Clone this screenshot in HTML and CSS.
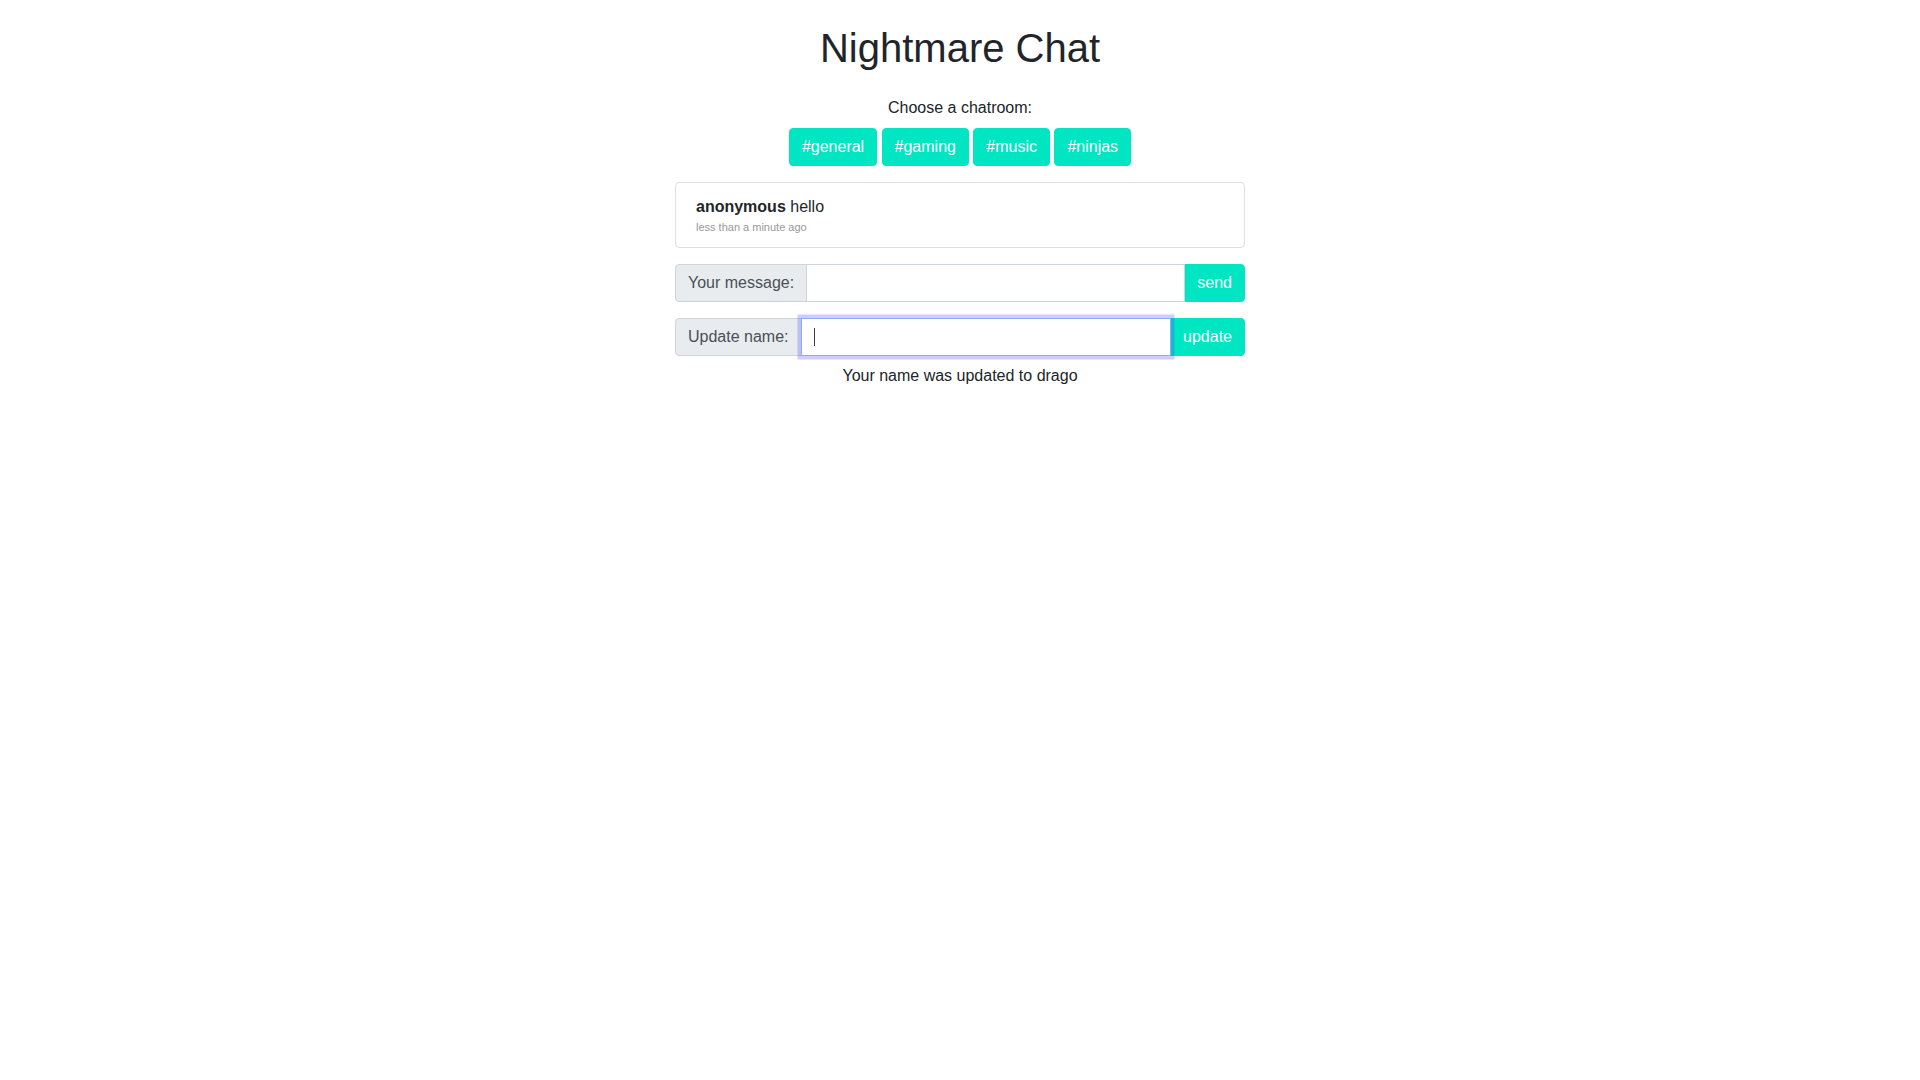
FILE: index.html
```html
<!DOCTYPE html>
<html lang="en">
<head>
<meta charset="utf-8">
<title>Nightmare Chat</title>
<link rel="stylesheet" href="styles.css">
</head>
<body>
<main class="app">
  <h1 class="title">Nightmare Chat</h1>
  <p class="choose">Choose a chatroom:</p>
  <div class="rooms">
    <button class="btn">#general</button>
    <button class="btn">#gaming</button>
    <button class="btn">#music</button>
    <button class="btn">#ninjas</button>
  </div>
  <ul class="messages">
    <li class="message">
      <div class="message-line"><strong class="author">anonymous</strong> hello</div>
      <div class="message-time">less than a minute ago</div>
    </li>
  </ul>
  <form class="input-group">
    <span class="input-label">Your message:</span>
    <div class="field-wrap">
      <input class="field" type="text">
    </div>
    <button type="button" class="btn btn-append">send</button>
  </form>
  <form class="input-group input-group-last">
    <span class="input-label">Update name:</span>
    <div class="field-wrap field-wrap-focused">
      <input class="field field-focused" type="text">
      <span class="caret"></span>
    </div>
    <button type="button" class="btn btn-append">update</button>
  </form>
  <p class="status">Your name was updated to drago</p>
</main>
</body>
</html>
```
FILE: styles.css
```css
* { box-sizing: border-box; }
html, body { margin: 0; padding: 0; background: #fff; }
body {
  font-family: "Liberation Sans", Arial, sans-serif;
  font-size: 16px;
  line-height: 1.5;
  color: #212529;
}
.app {
  width: 570px;
  margin: 0 auto;
  padding-top: 24px;
  display: flex;
  flex-direction: column;
}
.title {
  margin: 0 0 24px;
  font-size: 40px;
  line-height: 1.2;
  font-weight: 400;
  text-align: center;
}
.choose {
  margin: 0 0 8px;
  text-align: center;
}
.rooms {
  display: flex;
  justify-content: center;
  gap: 4.4px;
  margin-bottom: 16px;
}
.btn {
  font-family: inherit;
  font-size: 16px;
  line-height: 1.5;
  padding: 6px 12px;
  border: 1px solid #00e6c3;
  background: #00e6c3;
  color: #fff;
  border-radius: 4px;
  cursor: pointer;
}
.messages {
  list-style: none;
  margin: 0 0 16px;
  padding: 0;
  border: 1px solid rgba(0, 0, 0, .125);
  border-radius: 4px;
}
.message {
  padding: 12px 20px;
}
.author { font-weight: 700; }
.message-time {
  font-size: 11px;
  line-height: 16px;
  color: #999;
}
.input-group {
  display: flex;
  align-items: stretch;
  margin: 0 0 16px;
}
.input-group-last { margin-bottom: 8px; }
.input-label {
  display: flex;
  align-items: center;
  padding: 6px 12px;
  background: #e9ecef;
  color: #495057;
  border: 1px solid #ced4da;
  border-radius: 4px 0 0 4px;
  white-space: nowrap;
}
.field-wrap {
  flex: 1 1 auto;
  min-width: 0;
  margin-left: -1px;
  display: flex;
  position: relative;
}
.field-wrap-focused { z-index: 3; }
.field {
  flex: 1 1 auto;
  min-width: 0;
  height: 38px;
  padding: 6px 12px;
  font-family: inherit;
  font-size: 16px;
  color: #495057;
  background: #fff;
  border: 1px solid #ced4da;
  border-radius: 0;
  outline: none;
}
.field-focused {
  border-color: #8fadf7;
  box-shadow: 0 0 0 3.5px rgba(60, 60, 255, .26);
}
.caret {
  position: absolute;
  left: 13px;
  top: 10px;
  width: 1px;
  height: 18px;
  background: #3a3f44;
}
.btn-append {
  margin-left: -1px;
  border-radius: 0 4px 4px 0;
}
.status {
  margin: 0;
  text-align: center;
}
```
